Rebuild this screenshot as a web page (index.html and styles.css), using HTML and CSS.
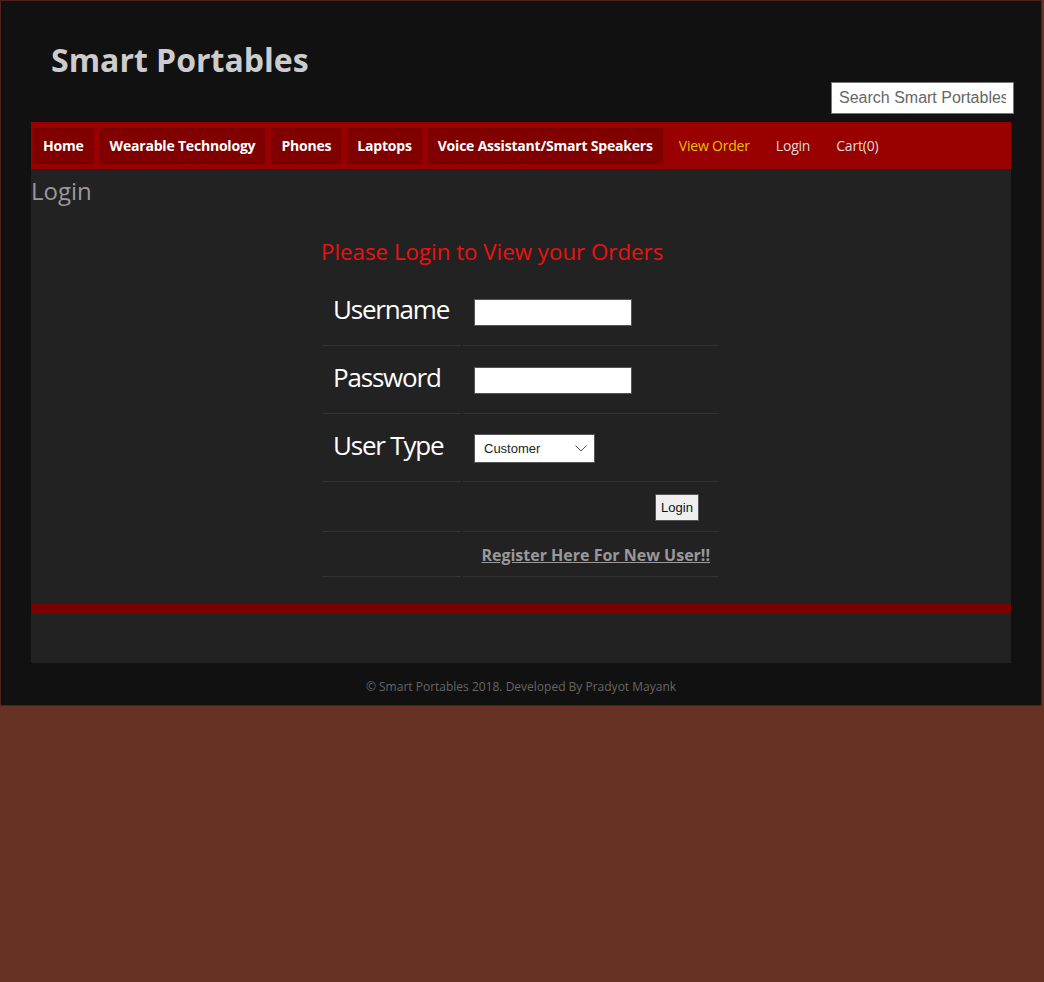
FILE: index.html
```html
<!DOCTYPE html>
<html>
<head>
<meta charset="utf-8">
<title>Smart Portables - Login</title>
<link rel="stylesheet" href="styles.css">
</head>
<body>
<div class="wrapper">
  <header class="header">
    <h1 class="logo">Smart Portables</h1>
    <div class="search-row">
      <input class="search" type="text" placeholder="Search Smart Portables">
    </div>
  </header>
  <nav class="nav">
    <a class="nav-box" href="#">Home</a>
    <a class="nav-box" href="#">Wearable Technology</a>
    <a class="nav-box" href="#">Phones</a>
    <a class="nav-box" href="#">Laptops</a>
    <a class="nav-box" href="#">Voice Assistant/Smart Speakers</a>
    <a class="nav-link active" href="#">View Order</a>
    <a class="nav-link" href="#">Login</a>
    <a class="nav-link" href="#">Cart(0)</a>
  </nav>
  <main class="content">
    <h2 class="page-title">Login</h2>
    <div class="form-wrap">
      <h3 class="form-title">Please Login to View your Orders</h3>
      <table class="login-table">
        <tr class="row-tall">
          <td class="label"><span>Username</span></td>
          <td class="field"><input class="text-input" type="text"></td>
        </tr>
        <tr class="row-tall">
          <td class="label"><span>Password</span></td>
          <td class="field"><input class="text-input" type="password"></td>
        </tr>
        <tr class="row-tall">
          <td class="label"><span>User Type</span></td>
          <td class="field">
            <div class="select-wrap">
              <select class="select">
                <option>Customer</option>
                <option>Store Manager</option>
                <option>Salesman</option>
              </select>
              <svg class="chevron" width="12" height="7" viewBox="0 0 12 7"><path d="M0.5 0.5 L6 6 L11.5 0.5" fill="none" stroke="#555" stroke-width="1"/></svg>
            </div>
          </td>
        </tr>
        <tr class="row-btn">
          <td class="label"></td>
          <td class="field right"><button class="btn" type="button">Login</button></td>
        </tr>
        <tr class="row-link">
          <td class="label"></td>
          <td class="field right"><a class="register" href="#">Register Here For New User!!</a></td>
        </tr>
      </table>
    </div>
    <div class="stripe"></div>
    <div class="content-bottom"></div>
  </main>
  <footer class="footer">© Smart Portables 2018. Developed By Pradyot Mayank</footer>
</div>
</body>
</html>
```

FILE: styles.css
```css
html, body {
  margin: 0;
  padding: 0;
}
body {
  background: #663322;
  font-family: "Open Sans", "Liberation Sans", sans-serif;
}
.wrapper {
  height: 704px;
  background: #111111;
  border: 1px solid #4e2416;
  padding: 0 30px;
  box-sizing: content-box;
  width: 980px;
  display: flex;
  flex-direction: column;
}
.header {
  display: flex;
  flex-direction: column;
  height: 121px;
}
.logo {
  margin: 37px 0 0 20px;
  font-size: 32px;
  font-weight: 700;
  color: #cccccc;
  line-height: 44px;
}
.search-row {
  display: flex;
  justify-content: flex-end;
  margin-right: -3px;
}
.search {
  width: 183px;
  height: 32px;
  box-sizing: border-box;
  border: 1px solid #767676;
  font-family: "Liberation Sans", Arial, sans-serif;
  font-size: 16px;
  padding: 0 7px;
  background: #fff;
  color: #333;
}
.search::placeholder {
  color: #666666;
}
.nav {
  background: #990000;
  height: 47px;
  display: flex;
  align-items: center;
  gap: 6px;
  padding: 0 2px;
  box-sizing: border-box;
}
.nav a {
  text-decoration: none;
  font-size: 14px;
  letter-spacing: -0.2px;
}
.nav-box {
  display: flex;
  align-items: center;
  height: 35px;
  box-sizing: border-box;
  padding: 0 9px 1px 9px;
  background: #800000;
  border: 1px solid #780000;
  border-radius: 2px;
  box-shadow: 0 1px 1px rgba(0, 0, 0, 0.25);
  color: #ffffff;
  font-weight: 700;
}
.nav-link {
  padding: 0 10px 1px 10px;
  color: #dddddd;
}
.nav-link.active {
  color: #e8c000;
}
.content {
  background: #222222;
  height: 494px;
  display: flex;
  flex-direction: column;
}
.page-title {
  margin: 5px 0 0 0;
  font-size: 24px;
  font-weight: 400;
  color: #999999;
  line-height: 33px;
}
.form-wrap {
  align-self: center;
  width: 400px;
  margin-top: 30px;
}
.form-title {
  margin: 0 0 11px 0;
  font-size: 22.3px;
  font-weight: 400;
  color: #ee1111;
  line-height: 30px;
}
.login-table {
  border-collapse: separate;
  border-spacing: 2px;
  margin-left: 0;
  width: 400px;
}
.login-table td {
  border-bottom: 1px solid #333333;
  padding: 0;
  vertical-align: middle;
}
.label {
  width: 138px;
  box-sizing: border-box;
}
.label span {
  display: block;
  padding-left: 10px;
  font-size: 26px;
  color: #ffffff;
  letter-spacing: -1.2px;
  margin-top: -8px;
}
.field {
  padding-left: 11px !important;
}
.field.right {
  text-align: right;
}
.row-tall td {
  height: 65px;
}
.row-btn td {
  height: 47px;
}
.row-link td {
  height: 42px;
}
.text-input {
  width: 158px;
  height: 27px;
  box-sizing: border-box;
  border: 1px solid #555;
  background: #fff;
  margin: 0;
  display: block;
}
.select-wrap {
  position: relative;
  width: 121px;
  height: 29px;
}
.select {
  -webkit-appearance: none;
  appearance: none;
  width: 121px;
  height: 29px;
  box-sizing: border-box;
  border: 1px solid #555;
  border-radius: 0;
  background: #fff;
  font-family: "Liberation Sans", Arial, sans-serif;
  font-size: 13px;
  color: #222;
  padding: 0 0 0 9px;
  display: block;
  margin: 0;
}
.chevron {
  position: absolute;
  right: 8px;
  top: 11px;
  pointer-events: none;
}
.btn {
  font-family: "Liberation Sans", Arial, sans-serif;
  font-size: 13px;
  height: 27px;
  width: 44px;
  padding: 0;
  border: 1px solid #555;
  background: #efefef;
  color: #111;
  margin-right: 20px;
}
.register {
  display: inline-block;
  margin-right: 9px;
  font-size: 16px;
  font-weight: 700;
  color: #999999;
  text-decoration: underline;
}
.stripe {
  margin-top: auto;
  height: 10px;
  background: #7a0000;
}
.content-bottom {
  height: 49px;
}
.footer {
  text-align: center;
  color: #666666;
  font-size: 12px;
  padding-top: 15px;
}
```
